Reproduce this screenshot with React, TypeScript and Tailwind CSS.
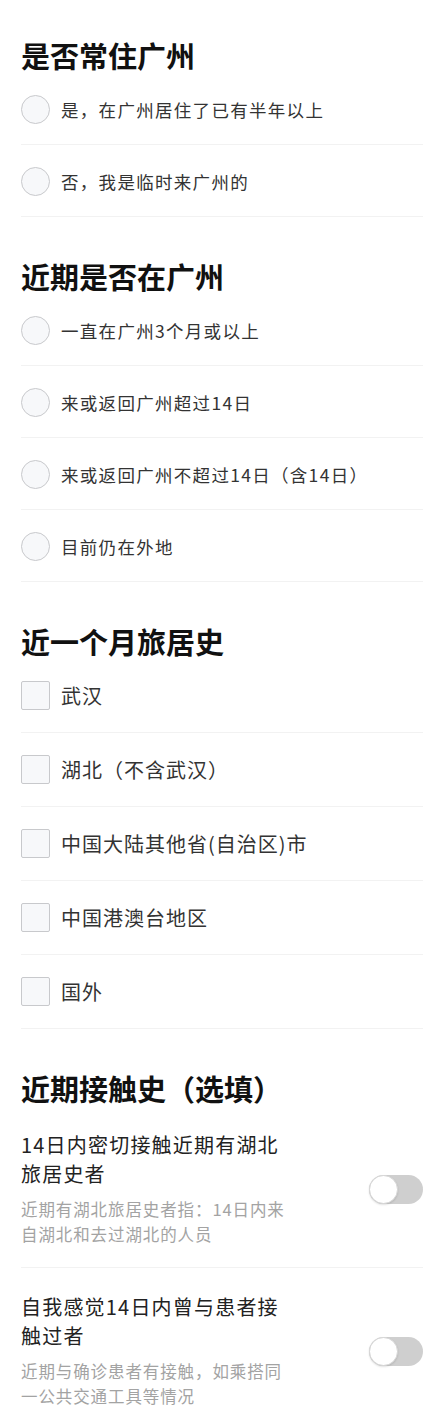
import { useState } from "react";

// ─────────────────────────────
// 表单数据
// ─────────────────────────────
const residentOptions = ["是，在广州居住了已有半年以上", "否，我是临时来广州的"];

const recentOptions = [
  "一直在广州3个月或以上",
  "来或返回广州超过14日",
  "来或返回广州不超过14日（含14日）",
  "目前仍在外地",
];

const travelOptions = [
  "武汉",
  "湖北（不含武汉）",
  "中国大陆其他省(自治区)市",
  "中国港澳台地区",
  "国外",
];

const contactOptions = [
  {
    title: "14日内密切接触近期有湖北旅居史者",
    desc: "近期有湖北旅居史者指：14日内来自湖北和去过湖北的人员",
  },
  {
    title: "自我感觉14日内曾与患者接触过者",
    desc: "近期与确诊患者有接触，如乘搭同一公共交通工具等情况",
  },
];

// ─────────────────────────────
// App：健康申报表单页
// ─────────────────────────────
export default function App() {
  const [resident, setResident] = useState<number | null>(null);
  const [recent, setRecent] = useState<number | null>(null);
  const [travel, setTravel] = useState<number[]>([]);
  const [contact, setContact] = useState<boolean[]>([false, false]);

  const toggleTravel = (i: number) =>
    setTravel((prev) => (prev.includes(i) ? prev.filter((v) => v !== i) : [...prev, i]));

  return (
    <div className="min-h-screen bg-white px-[21px] pt-[38px] font-['Noto_Sans_CJK_SC','Noto_Sans',sans-serif]">
      {/* 是否常住广州 */}
      <SectionTitle first>是否常住广州</SectionTitle>
      {residentOptions.map((label, i) => (
        <RadioRow key={label} label={label} checked={resident === i} onClick={() => setResident(i)} />
      ))}

      {/* 近期是否在广州 */}
      <SectionTitle>近期是否在广州</SectionTitle>
      {recentOptions.map((label, i) => (
        <RadioRow key={label} label={label} checked={recent === i} onClick={() => setRecent(i)} />
      ))}

      {/* 近一个月旅居史 */}
      <SectionTitle>近一个月旅居史</SectionTitle>
      {travelOptions.map((label, i) => (
        <CheckRow key={label} label={label} checked={travel.includes(i)} onClick={() => toggleTravel(i)} />
      ))}

      {/* 近期接触史（选填） */}
      <SectionTitle>近期接触史（选填）</SectionTitle>
      {contactOptions.map((item, i) => (
        <SwitchRow
          key={item.title}
          title={item.title}
          desc={item.desc}
          on={contact[i]}
          onClick={() => setContact((prev) => prev.map((v, j) => (j === i ? !v : v)))}
        />
      ))}
    </div>
  );
}

// ─────────────────────────────
// SectionTitle：分组标题
// ─────────────────────────────
function SectionTitle({ children, first }: { children: React.ReactNode; first?: boolean }) {
  return (
    <h2 className={`${first ? "" : "mt-[42px]"} text-[29px] leading-[35px] font-bold text-[#111]`}>
      {children}
    </h2>
  );
}

// ─────────────────────────────
// RadioRow：单选项
// ─────────────────────────────
type RowProps = { label: string; checked: boolean; onClick: () => void };

function RadioRow({ label, checked, onClick }: RowProps) {
  return (
    <div
      onClick={onClick}
      className="flex items-center gap-[11px] pt-[22px] pb-[20px] border-b border-[#f2f2f2] cursor-pointer"
    >
      <span
        className={`flex h-[29px] w-[29px] shrink-0 items-center justify-center rounded-full border ${
          checked ? "border-[#1989fa] bg-[#1989fa]" : "border-[#c8c9cc] bg-[#f7f8fa]"
        }`}
      >
        {checked && <span className="h-[11px] w-[11px] rounded-full bg-white" />}
      </span>
      <span className="text-[17.5px] leading-[29px] tracking-[1.3px] text-[#333]">{label}</span>
    </div>
  );
}

// ─────────────────────────────
// CheckRow：多选项
// ─────────────────────────────
function CheckRow({ label, checked, onClick }: RowProps) {
  return (
    <div
      onClick={onClick}
      className="flex items-center gap-[11px] py-[22px] border-b border-[#f2f2f2] cursor-pointer"
    >
      <span
        className={`flex h-[29px] w-[29px] shrink-0 items-center justify-center rounded-[2px] border ${
          checked ? "border-[#1989fa] bg-[#1989fa]" : "border-[#c8c9cc] bg-[#f7f8fa]"
        }`}
      >
        {checked && <span className="text-[16px] leading-none text-white">✓</span>}
      </span>
      <span className="text-[20px] leading-[29px] tracking-[1px] text-[#333]">{label}</span>
    </div>
  );
}

// ─────────────────────────────
// SwitchRow：带说明的开关项
// ─────────────────────────────
type SwitchRowProps = { title: string; desc: string; on: boolean; onClick: () => void };

function SwitchRow({ title, desc, on, onClick }: SwitchRowProps) {
  return (
    <div className="flex items-center justify-between pt-[25px] pb-[20px] border-b border-[#f2f2f2]">
      <div className="w-[272px]">
        <p className="text-[20px] leading-[28.5px] tracking-[1.2px] text-[#222]">{title}</p>
        <p className="mt-[9px] text-[16.5px] leading-[25px] tracking-[0.9px] text-[#a3a3a3]">{desc}</p>
      </div>
      <button
        onClick={onClick}
        className={`flex h-[29px] w-[54px] shrink-0 items-center rounded-full ${
          on ? "justify-end bg-[#1989fa]" : "justify-start bg-[#cfcfcf]"
        }`}
      >
        <span className="h-[29px] w-[29px] rounded-full border border-[#d6d6d6] bg-white shadow-[0_1px_2px_rgba(0,0,0,0.12)]" />
      </button>
    </div>
  );
}
